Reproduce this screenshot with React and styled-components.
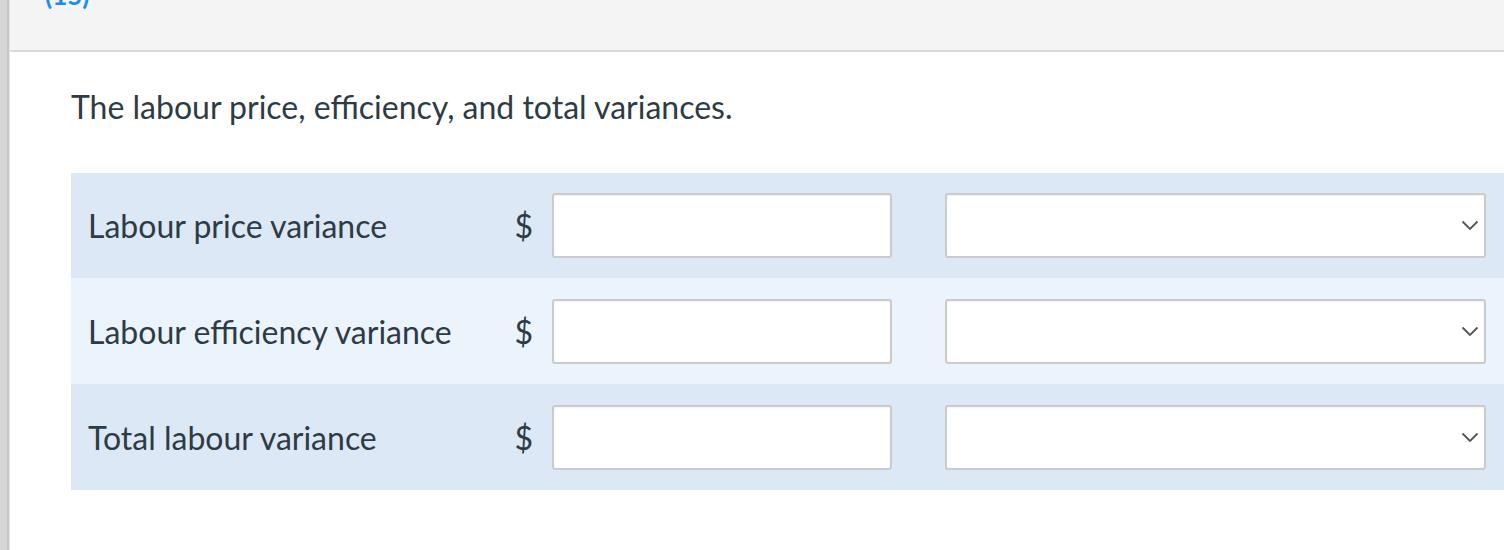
import styled, { createGlobalStyle } from "styled-components";

const GlobalStyle = createGlobalStyle`
  html, body {
    margin: 0;
    padding: 0;
    background: #ffffff;
    overflow: hidden;
  }
  body {
    font-family: Lato, "Open Sans", sans-serif;
  }
`;

const Page = styled.div`
  display: flex;
  min-height: 550px;
  width: 1504px;
  overflow: hidden;
`;

const SideStrip = styled.div`
  width: 7px;
  flex-shrink: 0;
  background: #d6d6d6;
  border-right: 2px solid #c6c6c6;
  box-shadow: 1px 0 0 #e4e4e4;
  margin-right: 1px;
`;

const Main = styled.div`
  flex: 1;
  min-width: 0;
  display: flex;
  flex-direction: column;
`;

const Header = styled.div`
  height: 50px;
  background: #f4f4f4;
  border-bottom: 2px solid #dadada;
  padding-left: 35px;
  overflow: hidden;
`;

const QuestionNumber = styled.div`
  color: #1a8fe3;
  font-size: 26px;
  font-weight: 700;
  line-height: 26px;
  margin-top: -18px;
`;

const Content = styled.div`
  padding: 36px 0 0 61px;
`;

const Prompt = styled.p`
  margin: 0 0 47px;
  font-size: 32px;
  line-height: 38px;
  color: #2d3b45;
`;

const Table = styled.div`
  width: 1460px;
  display: flex;
  flex-direction: column;
`;

const Row = styled.div`
  display: flex;
  align-items: center;
  height: ${(p) => p.$h}px;
  padding-left: 17px;
  background: ${(p) => (p.$alt ? "#ebf3fd" : "#dde8f6")};
`;

const Label = styled.div`
  width: 410px;
  font-size: 32px;
  color: #2d3b45;
`;

const Currency = styled.div`
  width: 35px;
  padding-right: 19px;
  text-align: right;
  font-size: 32px;
  color: #2d3b45;
`;

const AmountInput = styled.input`
  box-sizing: border-box;
  width: 340px;
  height: 65px;
  border: 2px solid #cbcbcb;
  border-radius: 3px;
  background: #ffffff;
  box-shadow: inset 0 1px 2px rgba(0, 0, 0, 0.06);
  font-family: inherit;
  font-size: 24px;
  padding: 0 12px;
  outline: none;
`;

const SelectBox = styled.div`
  box-sizing: border-box;
  width: 541px;
  height: 65px;
  margin-left: 53px;
  border: 2px solid #cbcbcb;
  border-radius: 3px;
  background: #ffffff;
  box-shadow: inset 0 1px 2px rgba(0, 0, 0, 0.06);
  display: flex;
  align-items: center;
  justify-content: flex-end;
  padding-right: 5px;
`;

const Chevron = () => (
  <svg width="18" height="11" viewBox="0 0 18 11" fill="none">
    <path d="M1.5 1.5 L9 9 L16.5 1.5" stroke="#555" strokeWidth="1.8" />
  </svg>
);

const rows = [
  { label: "Labour price variance", h: 105 },
  { label: "Labour efficiency variance", h: 106, alt: true },
  { label: "Total labour variance", h: 106 },
];

export default function App() {
  return (
    <Page>
      <GlobalStyle />
      <SideStrip />
      <Main>
        <Header>
          <QuestionNumber>(15)</QuestionNumber>
        </Header>
        <Content>
          <Prompt>The labour price, efficiency, and total variances.</Prompt>
          <Table>
            {rows.map((r) => (
              <Row key={r.label} $alt={r.alt} $h={r.h}>
                <Label>{r.label}</Label>
                <Currency>$</Currency>
                <AmountInput type="text" />
                <SelectBox>
                  <Chevron />
                </SelectBox>
              </Row>
            ))}
          </Table>
        </Content>
      </Main>
    </Page>
  );
}
